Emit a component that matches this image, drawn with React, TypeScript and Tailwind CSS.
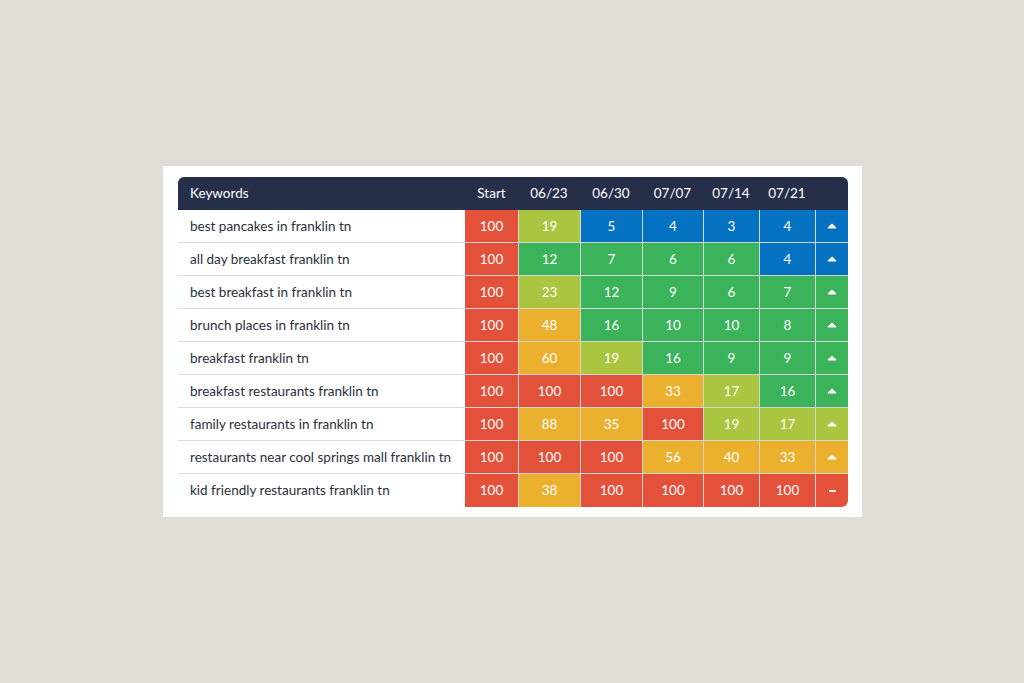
import React from "react";

type C = "r" | "yg" | "b" | "g" | "o";
const colorClass: Record<C, string> = {
  r: "bg-[#e4513a]",
  yg: "bg-[#aac540]",
  b: "bg-[#0571c1]",
  g: "bg-[#3bb35b]",
  o: "bg-[#ecb02f]",
};

const rows: { k: string; v: [string, C][]; t: [string, C] }[] = [
  { k: "best pancakes in franklin tn", v: [["100", "r"], ["19", "yg"], ["5", "b"], ["4", "b"], ["3", "b"], ["4", "b"]], t: ["up", "b"] },
  { k: "all day breakfast franklin tn", v: [["100", "r"], ["12", "g"], ["7", "g"], ["6", "g"], ["6", "g"], ["4", "b"]], t: ["up", "b"] },
  { k: "best breakfast in franklin tn", v: [["100", "r"], ["23", "yg"], ["12", "g"], ["9", "g"], ["6", "g"], ["7", "g"]], t: ["up", "g"] },
  { k: "brunch places in franklin tn", v: [["100", "r"], ["48", "o"], ["16", "g"], ["10", "g"], ["10", "g"], ["8", "g"]], t: ["up", "g"] },
  { k: "breakfast franklin tn", v: [["100", "r"], ["60", "o"], ["19", "yg"], ["16", "g"], ["9", "g"], ["9", "g"]], t: ["up", "g"] },
  { k: "breakfast restaurants franklin tn", v: [["100", "r"], ["100", "r"], ["100", "r"], ["33", "o"], ["17", "yg"], ["16", "g"]], t: ["up", "g"] },
  { k: "family restaurants in franklin tn", v: [["100", "r"], ["88", "o"], ["35", "o"], ["100", "r"], ["19", "yg"], ["17", "yg"]], t: ["up", "yg"] },
  { k: "restaurants near cool springs mall franklin tn", v: [["100", "r"], ["100", "r"], ["100", "r"], ["56", "o"], ["40", "o"], ["33", "o"]], t: ["up", "o"] },
  { k: "kid friendly restaurants franklin tn", v: [["100", "r"], ["38", "o"], ["100", "r"], ["100", "r"], ["100", "r"], ["100", "r"]], t: ["dash", "r"] },
];

const cols = "grid grid-cols-[287px_53px_62px_62px_61px_56px_56px_33px]";

function Up() {
  return (
    <svg width="10" height="6" viewBox="0 0 10 6">
      <path d="M5 0.5 L9.3 4.6 Q9.6 5.5 8.6 5.5 L1.4 5.5 Q0.4 5.5 0.7 4.6 Z" fill="white" />
    </svg>
  );
}

export default function App() {
  return (
    <div
      className="w-[1024px] h-[683px] bg-[#e1ddd6] pt-[166px] pl-[163px]"
      style={{ fontFamily: "Lato, 'Noto Sans', sans-serif" }}
    >
      <div className="w-[699px] h-[351px] bg-white pt-[11px] pl-[15px]">
        <div className="w-[670px] rounded-[6px] overflow-hidden">
          <div className={`${cols} h-[33px] bg-[#252f4a] text-white text-[13.5px] items-center`}>
            <div className="pl-[12px]">Keywords</div>
            <div className="text-center">Start</div>
            <div className="text-center">06/23</div>
            <div className="text-center">06/30</div>
            <div className="text-center">07/07</div>
            <div className="text-center">07/14</div>
            <div className="text-center">07/21</div>
            <div />
          </div>
          {rows.map((r, i) => (
            <div key={i} className={`${cols} h-[33px] text-[13.5px]`}>
              <div className={`pl-[12px] flex items-center text-[#2b2f3a] ${i < rows.length - 1 ? "border-b border-[#dedede]" : ""}`}>
                {r.k}
              </div>
              {r.v.map(([n, c], j) => (
                <div
                  key={j}
                  className={`${colorClass[c]} flex items-center justify-center text-white ${j > 0 ? "border-l border-[#d4d4d4]" : ""} ${i < rows.length - 1 ? "border-b border-[#d4d4d4]" : ""}`}
                >
                  {n}
                </div>
              ))}
              <div
                className={`${colorClass[r.t[1]]} flex items-center justify-center border-l border-[#d4d4d4] ${i < rows.length - 1 ? "border-b" : "rounded-br-[6px]"}`}
              >
                {r.t[0] === "up" ? <Up /> : <div className="w-[7px] h-[2px] bg-white rounded-full" />}
              </div>
            </div>
          ))}
        </div>
      </div>
    </div>
  );
}
